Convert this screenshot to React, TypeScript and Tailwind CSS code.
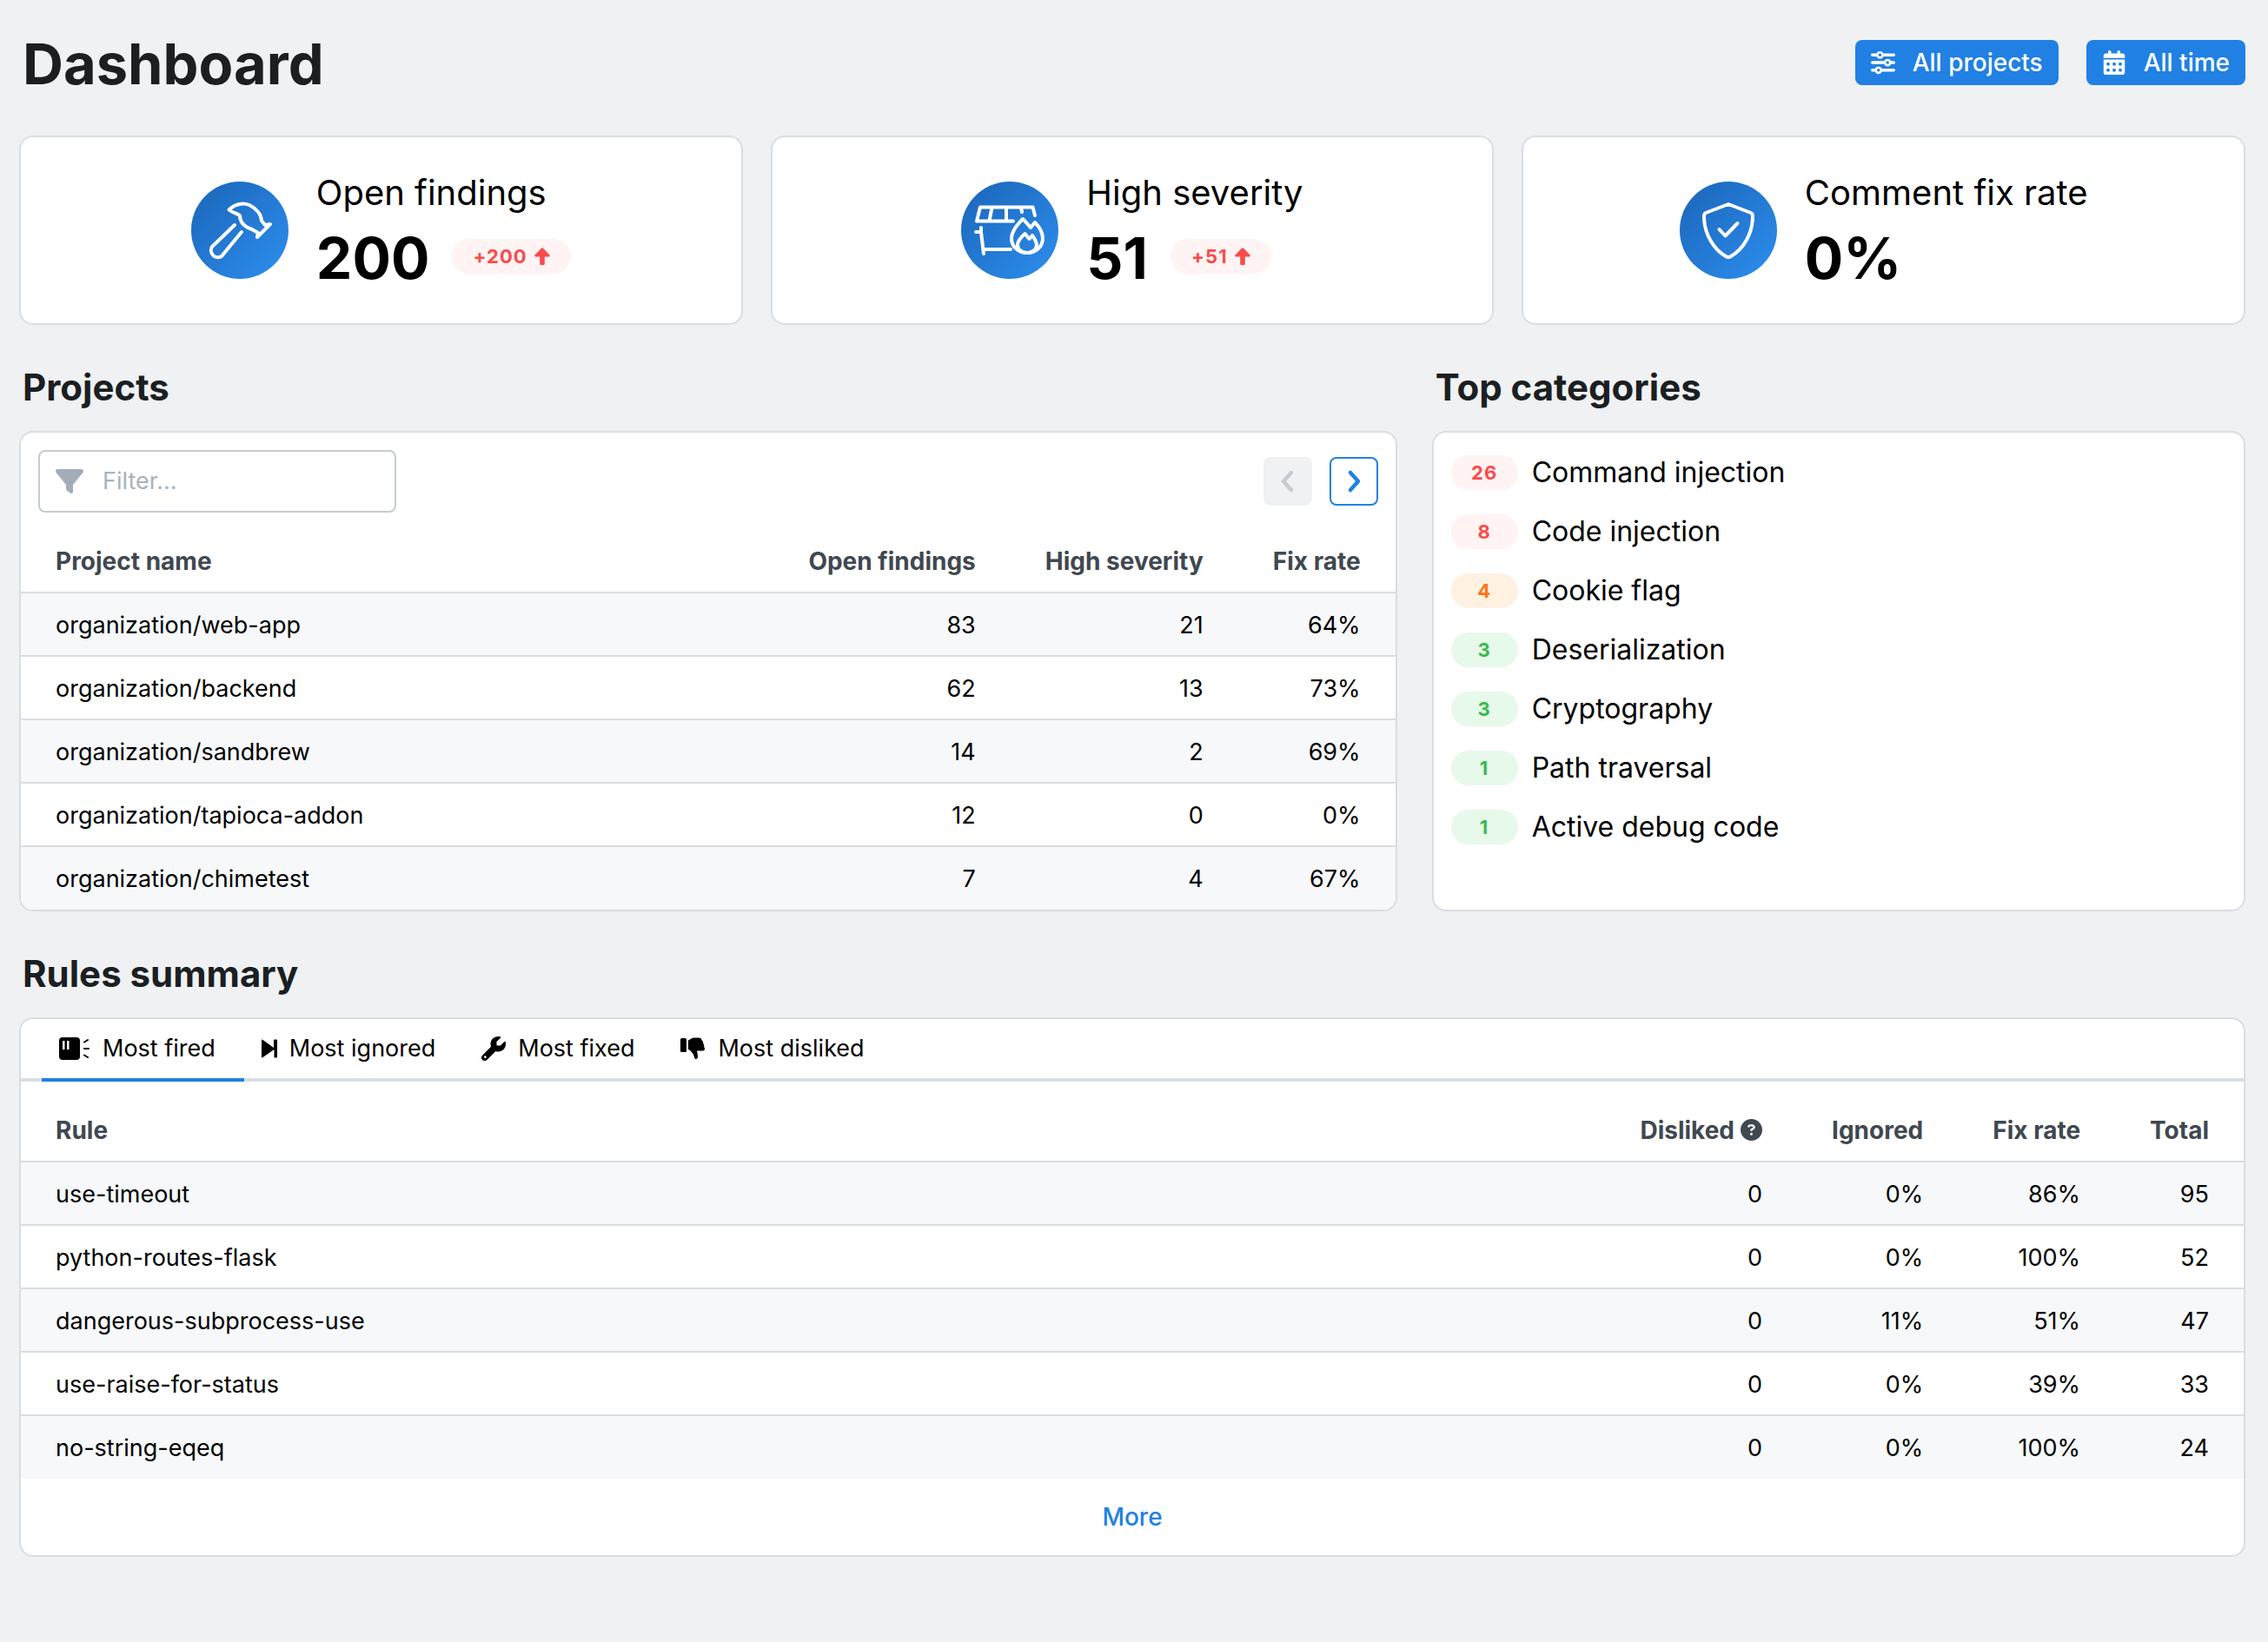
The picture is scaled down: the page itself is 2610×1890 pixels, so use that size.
import React from "react";
import {
  FaSliders,
  FaCalendarDays,
  FaFilter,
  FaWrench,
  FaCircleQuestion,
} from "react-icons/fa6";

const projects = [
  ["organization/web-app", "83", "21", "64%"],
  ["organization/backend", "62", "13", "73%"],
  ["organization/sandbrew", "14", "2", "69%"],
  ["organization/tapioca-addon", "12", "0", "0%"],
  ["organization/chimetest", "7", "4", "67%"],
];

const rules = [
  ["use-timeout", "0", "0%", "86%", "95"],
  ["python-routes-flask", "0", "0%", "100%", "52"],
  ["dangerous-subprocess-use", "0", "11%", "51%", "47"],
  ["use-raise-for-status", "0", "0%", "39%", "33"],
  ["no-string-eqeq", "0", "0%", "100%", "24"],
];

const red = "bg-[#fff3f3] text-[#fa4b4b]";
const orange = "bg-[#fff1e2] text-[#fd7515]";
const green = "bg-[#e7f9ea] text-[#3cb951]";

const categories = [
  ["26", "Command injection", red],
  ["8", "Code injection", red],
  ["4", "Cookie flag", orange],
  ["3", "Deserialization", green],
  ["3", "Cryptography", green],
  ["1", "Path traversal", green],
  ["1", "Active debug code", green],
];

function HammerIcon() {
  return (
    <g>
      <path d="M50 50 L24 75 A8 8 0 0 0 35 86 L58 58" />
      <path d="M43.5 32.5 C50 26 59 24 67 27 C75 31 81 38 81 45 L85 50 L91 49 L76 64 L77 59 L70 55 C61 52 56 46 56 39 C52 36 48 36 43.5 32.5Z" />
    </g>
  );
}

function DumpsterFireIcon() {
  return (
    <g>
      <path d="M85 39 L82.5 29.5 H22 L18 45.5 H60 M35.5 30 L32.5 45 M52 30 V45 M69 30 L70 35" />
      <path d="M17 58 H23 L26 83 M23 53 V58 M26 78 H57" />
      <path d="M71 43 C65 49 58 57 58 65.5 C58 75 66 82 76 82 C86 82 94 75 94 65.5 C94 59 90 52 85 47 L80 53 C77 49 74 46 71 43Z" />
      <path d="M73.5 60 C69 64 65 69 65 73 C65 78 70 82 76 82 C82 82 87 78 87 73 C87 69 84 65 82 62 L78.5 66 L73.5 60Z" />
    </g>
  );
}

function ShieldIcon() {
  return (
    <g>
      <path d="M56 26 L82 36 Q84 37 84 40 C84 60 73 78 59 86 Q56 88 53 86 C39 78 28 60 28 40 Q28 37 30 36Z" />
      <path d="M45.5 55 L52.5 62.5 L66.5 48" />
    </g>
  );
}

function FiredIcon() {
  return (
    <svg viewBox="0 0 36 26" width="36" height="26" aria-hidden="true">
      <path
        fillRule="evenodd"
        fill="currentColor"
        d="M4 0H20Q24 0 24 4V22Q24 26 20 26H4Q0 26 0 22V4Q0 0 4 0ZM4 4V14H6.5V4ZM9 4V14H11.5V4Z"
      />
      <path d="M29 5.5L33 3M29 13H34M29 20.5L33 23" stroke="currentColor" strokeWidth="2" strokeLinecap="round" />
    </svg>
  );
}

function SkipIcon() {
  return (
    <svg viewBox="0 0 18 22" width="18" height="22" fill="currentColor" aria-hidden="true">
      <path d="M0 1.5Q0 0 1.5 1L14 10V1.5Q14 0.5 15 0.5H17Q18 0.5 18 1.5V20.5Q18 21.5 17 21.5H15.5Q14.5 21.5 14.5 20.5V12L1.5 21Q0 22 0 20.5Z" />
    </svg>
  );
}

function ThumbsDownIcon() {
  return (
    <svg viewBox="0 0 29 26" width="29" height="26" fill="currentColor" aria-hidden="true">
      <rect x="0" y="1" width="7" height="16" rx="1.5" />
      <path d="M9 3.5C12 2 13 0.5 16 0.5H21C23.5 0.5 24.5 1.5 24.5 3.5C26 4 26.5 5.5 26 7C27.5 8 27.5 9.5 27 11C28.5 12 28.5 15.5 26 15.5H19C19.5 18 20 20 20 22.5C20 25.5 16.5 26 16 23C15.5 19.5 13.5 17.5 11.5 15.5L9 13.5Z" />
    </svg>
  );
}

function ArrowUpIcon() {
  return (
    <svg viewBox="0 0 18 20" width="18" height="20" fill="currentColor" aria-hidden="true">
      <path d="M8 0.8Q9 -0.2 10 0.8L17.5 8.5Q18.5 10.5 16.5 10.5H11.8V18.5Q11.8 20 10.5 20H7.5Q6.2 20 6.2 18.5V10.5H1.5Q-0.5 10.5 0.5 8.5Z" />
    </svg>
  );
}

function Chevron({ d }: { d: string }) {
  return (
    <svg
      viewBox="0 0 28 28"
      width="28"
      height="28"
      fill="none"
      stroke="currentColor"
      strokeWidth="4.5"
      strokeLinecap="round"
      strokeLinejoin="round"
      aria-hidden="true"
    >
      <path d={d} />
    </svg>
  );
}

function Stat({ icon, label, value, delta }: { icon: React.ReactNode; label: string; value: string; delta?: string }) {
  return (
    <section className="flex items-center justify-center gap-8 rounded-2xl border-2 border-[#d9dee3] bg-white py-8">
      <div className="size-28 shrink-0 rounded-full bg-linear-to-br from-[#1b65b9] to-[#2d8fef]">
        <svg
          viewBox="0 0 112 112"
          className="size-28"
          fill="none"
          stroke="white"
          strokeWidth="4"
          strokeLinecap="round"
          strokeLinejoin="round"
          aria-hidden="true"
        >
          {icon}
        </svg>
      </div>
      <div className="pt-1">
        <h2 className="mb-1 text-[40px] leading-[56px]">{label}</h2>
        <div className="flex items-center gap-[26px]">
          <span className="text-[66px] leading-[86px] font-bold">{value}</span>
          {delta && (
            <span className="mb-1 flex h-10 items-center gap-2 rounded-full bg-[#fff3f3] px-6 text-[22px] font-bold tracking-wider text-[#fa4b4b]">
              {delta}
              <ArrowUpIcon />
            </span>
          )}
        </div>
      </div>
    </section>
  );
}

function DataTable({ heads, rows }: { heads: React.ReactNode[]; rows: string[][] }) {
  return (
    <table className="w-full border-collapse">
      <thead>
        <tr className="h-[72px] text-[28px] text-[#404850]">
          {heads.map((h, i) => (
            <th key={i} scope="col" className={i ? "w-px px-10 text-right font-bold whitespace-nowrap" : "px-10 text-left font-bold"}>
              {h}
            </th>
          ))}
        </tr>
      </thead>
      <tbody>
        {rows.map((r) => (
          <tr key={r[0]} className="h-[73px] border-t-2 border-[#d9dee3] odd:bg-[#f6f8fa]">
            {r.map((c, i) => (
              <td key={i} className={i ? "px-10 pt-[2px] text-right" : "px-10 pt-[2px]"}>
                {c}
              </td>
            ))}
          </tr>
        ))}
      </tbody>
    </table>
  );
}

const heading = "pl-1 text-[42px] leading-[52px] font-bold text-[#1b1f22]";
const panel = "overflow-hidden rounded-2xl border-2 border-[#d9dee3] bg-white";
const action = "flex h-[52px] items-center gap-5 rounded-lg bg-[#2180e3] px-[18px] text-[28px] font-medium text-white";
const pager = "flex size-14 items-center justify-center rounded-lg";
const tab = "flex items-center gap-[14px] pt-4 pr-[33px] pb-4 pl-5";

export default function App() {
  return (
    <main className="min-h-screen bg-[#eff1f3] pr-[26px] pb-24 pl-[22px] font-['Inter',sans-serif] text-[27px] leading-9 text-black">
      <header className="flex items-start justify-between pt-[34px] pl-1">
        <h1 className="text-[65px] leading-20 font-bold text-[#1b1f22]">Dashboard</h1>
        <div className="flex gap-8 pt-3">
          <button className={action}>
            <FaSliders />
            All projects
          </button>
          <button className={action}>
            <FaCalendarDays />
            All time
          </button>
        </div>
      </header>

      <div className="mt-[42px] grid grid-cols-3 gap-8">
        <Stat icon={<HammerIcon />} label="Open findings" value="200" delta="+200" />
        <Stat icon={<DumpsterFireIcon />} label="High severity" value="51" delta="+51" />
        <Stat icon={<ShieldIcon />} label="Comment fix rate" value="0%" />
      </div>

      <div className="mt-[46px] grid grid-cols-[1585fr_936fr] gap-10">
        <section className="flex flex-col gap-6">
          <h2 className={heading}>Projects</h2>
          <div className={panel}>
            <div className="flex items-center justify-between p-5">
              <label className="flex h-[72px] w-[412px] items-center gap-[22px] rounded-lg border-2 border-[#c5cbd3] px-[18px] text-[#a3acb8]">
                <FaFilter className="size-8 shrink-0" />
                <input type="text" aria-label="Filter projects" placeholder="Filter..." className="w-full min-w-0 outline-none placeholder:text-[#a9b2bd]" />
              </label>
              <div className="flex gap-5">
                <button disabled aria-label="Previous page" className={`bg-[#eff1f3] text-[#c5cbd3] ${pager}`}>
                  <Chevron d="M18 4 L9 14 L18 24" />
                </button>
                <button aria-label="Next page" className={`border-2 border-[#2180e3] text-[#2180e3] ${pager}`}>
                  <Chevron d="M10 4 L19 14 L10 24" />
                </button>
              </div>
            </div>
            <DataTable heads={["Project name", "Open findings", "High severity", "Fix rate"]} rows={projects} />
          </div>
        </section>

        <section className="flex flex-col gap-6">
          <h2 className={heading}>Top categories</h2>
          <div className={`grow ${panel}`}>
            <ul className="flex flex-col gap-7 px-5 py-[26px]">
              {categories.map(([count, name, tone]) => (
                <li key={name} className="flex h-10 items-center gap-4 text-[32px]">
                  <span className={`flex h-10 w-[77px] items-center justify-center rounded-full text-[22px] font-bold tracking-wider ${tone}`}>{count}</span>
                  {name}
                </li>
              ))}
            </ul>
          </div>
        </section>
      </div>

      <section className="mt-[46px] flex flex-col gap-6">
        <h2 className={heading}>Rules summary</h2>
        <div className={panel}>
          <div role="tablist" className="mb-5 flex border-b-4 border-[#d9dee3] px-6">
            <button role="tab" aria-selected="true" className={`-mb-1 border-b-4 border-[#2180e3] ${tab}`}>
              <FiredIcon />
              Most fired
            </button>
            <button role="tab" aria-selected="false" className={tab}>
              <SkipIcon />
              Most ignored
            </button>
            <button role="tab" aria-selected="false" className={tab}>
              <FaWrench className="size-7" />
              Most fixed
            </button>
            <button role="tab" aria-selected="false" className={tab}>
              <ThumbsDownIcon />
              Most disliked
            </button>
          </div>
          <DataTable
            heads={[
              "Rule",
              <span className="flex items-center justify-end gap-[7px]">
                Disliked
                <FaCircleQuestion className="size-[25px]" />
              </span>,
              "Ignored",
              "Fix rate",
              "Total",
            ]}
            rows={rules}
          />
          <div className="flex justify-center py-[26px]">
            <button className="text-[28px] font-medium text-[#2180e3]">More</button>
          </div>
        </div>
      </section>
    </main>
  );
}
